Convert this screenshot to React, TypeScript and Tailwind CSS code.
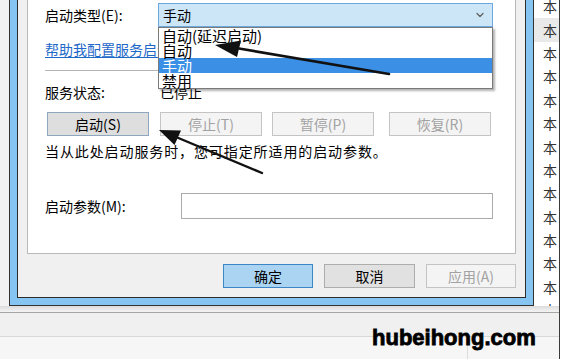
import React from 'react';
import { ChevronDown } from 'lucide-react';

const cjk = "font-['Noto_Sans_CJK_SC','Microsoft_YaHei',sans-serif]";

type BtnKind = 'normal' | 'focus' | 'primary' | 'disabled';

const btnStyle: Record<BtnKind, string> = {
  normal: 'bg-[#e1e1e1] border-[#adadad] text-black',
  focus: 'bg-[#dedede] border-[#8ea6be] text-black',
  primary: 'bg-[#abd4f3] border-[#3d86c6] text-black',
  disabled: 'bg-[#f4f4f4] border-[#c4c4c4] text-[#a2a2a2]',
};

function WinButton({ label, kind, className = '' }: { label: string; kind: BtnKind; className?: string }) {
  return (
    <div
      className={`flex items-center justify-center border h-[24px] text-[14px] leading-none ${btnStyle[kind]} ${className}`}
    >
      {label}
    </div>
  );
}

export default function App() {
  const listRows = Array.from({ length: 14 });

  return (
    <div className={`relative w-[561px] h-[359px] overflow-hidden bg-[#f0f0f0] flex ${cjk}`}>
      {/* main area */}
      <div className="w-[559px] flex flex-col">
        <div className="flex h-[306px]">
          <div className="w-[9px] bg-[#f2f2f2]" />

          {/* dialog frame */}
          <div className="w-[525px] flex flex-col border-x border-b border-[#333] bg-[#86c5f2] px-[7px] pb-[7px]">
            <div className="flex-1 flex flex-col border-x border-b border-[#2b2b2b] bg-[#f0f0f0] pl-[9px] pr-[9px]">
              {/* tab page */}
              <div className="relative h-[254px] border-x border-b border-[#b9b9b9] bg-white pl-[17px] pr-[22px] pt-[3px] text-[14px] text-black">
                {/* startup type */}
                <div className="flex items-center h-[24px]">
                  <div className="w-[113px] leading-none">启动类型(E):</div>
                  <div className="flex-1 h-[24px] flex items-center justify-between border border-[#6aa8de] bg-[#cde6f7] pl-[4px] pr-[6px]">
                    <span className="leading-none">手动</span>
                    <ChevronDown size={12} strokeWidth={2.5} className="text-[#606060]" />
                  </div>
                </div>

                <div className="mt-[14px] leading-[16px] text-[#1e68c8] underline underline-offset-2">
                  帮助我配置服务启动选项。
                </div>

                <div className="mt-[13px] h-px bg-[#b4b4b4]" />

                <div className="mt-[13px] flex leading-[16px]">
                  <div className="w-[115px]">服务状态:</div>
                  <div>已停止</div>
                </div>

                <div className="mt-[12px] flex">
                  <WinButton label="启动(S)" kind="focus" className="ml-[2px] w-[102px]" />
                  <WinButton label="停止(T)" kind="disabled" className="ml-[11px] w-[102px]" />
                  <WinButton label="暂停(P)" kind="disabled" className="ml-[10px] w-[102px]" />
                  <WinButton label="恢复(R)" kind="disabled" className="ml-[15px] w-[102px]" />
                </div>

                <div className="mt-[7px] leading-[16px] tracking-[0.9px]">
                  当从此处启动服务时，您可指定所适用的启动参数。
                </div>

                <div className="mt-[34px] flex items-center h-[26px]">
                  <div className="w-[136px] leading-none">启动参数(M):</div>
                  <div className="flex-1 h-[26px] border border-[#ababab] bg-white" />
                </div>

                {/* open dropdown list */}
                <div className="absolute left-[130px] top-[27px] w-[335px] border border-[#7a7a7a] bg-white shadow-[2px_2px_2px_rgba(0,0,0,0.3)] text-[15px] leading-[15px]">
                  <div className="h-[15px] pl-[3px]">自动(延迟启动)</div>
                  <div className="h-[15px] pl-[3px]">自动</div>
                  <div className="h-[15px] pl-[3px] bg-[#3b8fe5] text-white">手动</div>
                  <div className="h-[15px] pl-[3px]">禁用</div>
                </div>
              </div>

              {/* dialog buttons */}
              <div className="mt-[10px] flex justify-end gap-[11px]">
                <WinButton label="确定" kind="primary" className="w-[90px]" />
                <WinButton label="取消" kind="normal" className="w-[91px]" />
                <WinButton label="应用(A)" kind="disabled" className="w-[90px]" />
              </div>
            </div>
          </div>

          {/* list behind the dialog */}
          <div className="flex-1 bg-white overflow-hidden">
            <div className="-mt-[5px]">
              {listRows.map((_, i) => (
                <div
                  key={i}
                  className={`h-[23.4px] flex items-center pl-[9px] text-[14px] text-[#333] ${i === 1 ? 'bg-[#e9e9e9]' : ''}`}
                >
                  本
                </div>
              ))}
            </div>
          </div>
        </div>

        {/* bottom strip */}
        <div className="flex-1 flex flex-col bg-[#f4f4f4]">
          <div className="h-[6px] bg-gradient-to-b from-[#dcdcdc] to-[#f4f4f4]" />
          <div className="h-[24px] border-t border-[#a6a6a6] bg-[#f0f0f0]" />
          <div className="flex-1 flex border-t border-[#d8d8d8] bg-[#f6f6f6]">
            <div className="w-[468px] border-r border-[#dcdcdc]" />
          </div>
        </div>
      </div>

      <div className="w-px bg-[#3a3a3a]" />
      <div className="flex-1 bg-white" />

      {/* annotation arrows */}
      <svg className="absolute inset-0 pointer-events-none" width="561" height="359" viewBox="0 0 561 359">
        <line x1="389" y1="74" x2="236" y2="48" stroke="#111" strokeWidth="2.6" strokeLinecap="round" />
        <polygon points="215,45 241,40.5 237,57" fill="#111" />
        <line x1="262" y1="173" x2="176" y2="137" stroke="#111" strokeWidth="2.4" strokeLinecap="round" />
        <polygon points="159,130 181,130.5 174.5,145" fill="#111" />
      </svg>

      {/* watermark */}
      <div className="absolute left-[372px] top-[327px] text-[22px] leading-none font-bold text-black font-['Liberation_Sans',sans-serif] [-webkit-text-stroke:0.8px_black]">
        hubeihong.com
      </div>
    </div>
  );
}
